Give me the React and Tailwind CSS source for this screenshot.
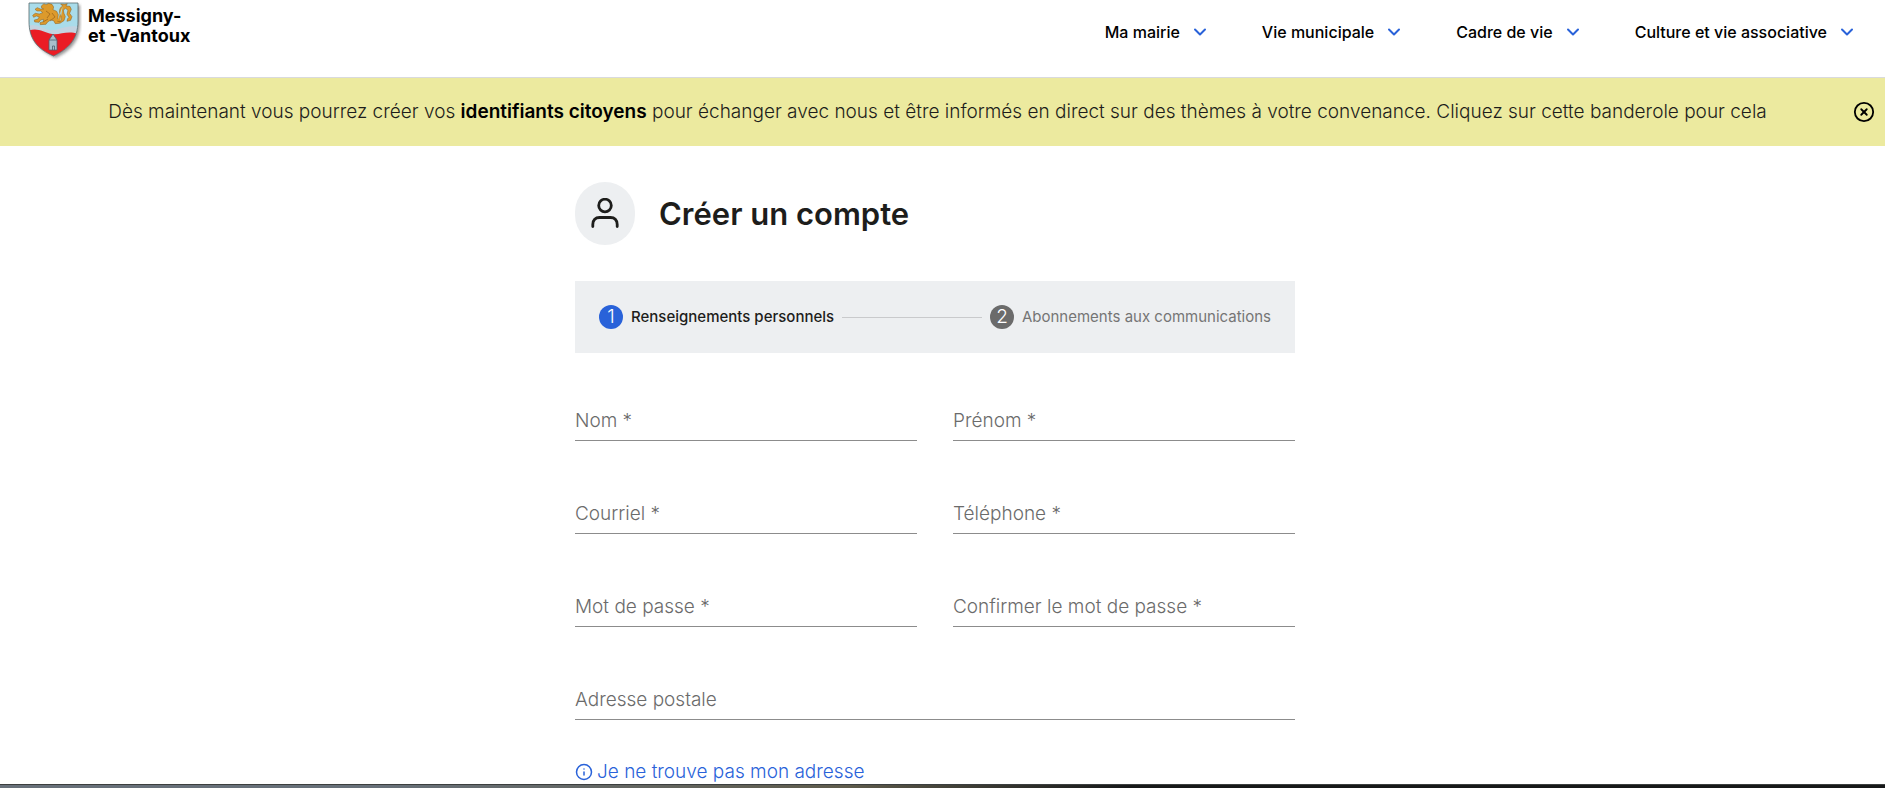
import { ChevronDown, CircleX, Info } from "lucide-react";

const menu = ["Ma mairie", "Vie municipale", "Cadre de vie", "Culture et vie associative"];

const fields = [
  { id: "nom", label: "Nom *", type: "text" },
  { id: "prenom", label: "Prénom *", type: "text" },
  { id: "courriel", label: "Courriel *", type: "email" },
  { id: "telephone", label: "Téléphone *", type: "tel" },
  { id: "motdepasse", label: "Mot de passe *", type: "password" },
  { id: "confirmation", label: "Confirmer le mot de passe *", type: "password" },
  { id: "adresse", label: "Adresse postale", type: "text", wide: true },
];

function Crest() {
  return (
    <svg viewBox="0 0 54 60" className="w-[54px] h-[60px]" aria-hidden="true">
      <defs>
        <clipPath id="shield">
          <path d="M1 1H50V19C50 38 40 47 25.500 54C10 47 1 38 1 19Z" />
        </clipPath>
        <filter id="shade" x="-10%" y="-10%" width="130%" height="130%">
          <feDropShadow dx="2" dy="2" stdDeviation="1.500" floodColor="#555" floodOpacity="0.600" />
        </filter>
      </defs>
      <g filter="url(#shade)">
        <path d="M1 1H50V19C50 38 40 47 25.500 54C10 47 1 38 1 19Z" fill="#a9dcea" />
      </g>
      <g clipPath="url(#shield)">
        <path d="M0 24C8 21 13 26 21 28C30 30 36 22 51 25V33C38 29 33 34 24 32C15 30 10 25 0 30Z" fill="#c3d3e0" />
        <path d="M0 29C9 25 15 30 24 32C33 33 39 28 51 32V56H0Z" fill="#ea1c24" />
      </g>
      <g transform="translate(-2 -2) scale(0.333)" fill="#dc9a2c" stroke="#8a5c1c" strokeWidth="1.500" strokeLinejoin="round">
        <path d="M46 18L54 11L60 14L68 10L78 13L83 21L81 29L92 34L97 44L95 57L104 64L101 70L88 71L83 62L74 60L65 66L60 73L43 74L42 68L52 65L53 58L44 60L39 67L26 66L25 60L35 58L40 51L31 48L23 52L20 46L28 40L40 42L50 38L44 33L33 33L27 28L34 23L43 27L53 27L47 24Z" />
        <path
          d="M94 64C110 68 108 54 103 44C98 34 101 23 110 18M110 18L104 12L116 13L124 11L120 18L132 19L136 28L131 40L138 50L134 61L123 64L125 56L129 52L123 43L126 31L119 25L112 30L114 40L118 50L114 62L102 70"
        />
      </g>
      <path d="M18 9L22 12L19 16M24 11L27 15L22 19M15 20L20 17" fill="none" stroke="#98621c" strokeWidth="0.700" />
      <path d="M21 38L25 32L29 38V48H21Z" fill="#a9bfcb" stroke="#4b616e" strokeWidth="0.800" />
      <path d="M21 38H29M24.500 48V44H26.500V48" fill="none" stroke="#4b616e" strokeWidth="0.800" />
      <path d="M1 1H50V19C50 38 40 47 25.500 54C10 47 1 38 1 19Z" fill="none" stroke="#5a6c70" strokeWidth="0.800" />
    </svg>
  );
}

function Header() {
  return (
    <header className="flex items-start justify-between h-[78px] pl-7 pr-7 border-b border-[#d9dadd]">
      <a href="#accueil" className="flex items-start gap-1.5 pt-0.5 text-black">
        <Crest />
        <span className="pt-1 text-[18px] leading-5 font-bold">
          Messigny-
          <br />
          et -Vantoux
        </span>
      </a>
      <nav className="flex items-center gap-[52px] h-16">
        {menu.map((item) => (
          <button key={item} type="button" className="flex items-center gap-2.5 text-[16px] font-medium text-black">
            {item}
            <ChevronDown className="w-5 h-5 text-[#2962d9]" strokeWidth={2.4} />
          </button>
        ))}
      </nav>
    </header>
  );
}

function Banner() {
  return (
    <div className="flex items-center h-[68px] pl-[86px] pr-2.5 bg-[#ecea9f]">
      <a href="#inscription" className="flex-1 text-center text-[19px] leading-7 font-light text-[#1d1d1b]">
        Dès maintenant vous pourrez créer vos <strong className="font-semibold text-black">identifiants citoyens</strong> pour
        échanger avec nous et être informés en direct sur des thèmes à votre convenance. Cliquez sur cette banderole pour cela
      </a>
      <button type="button" aria-label="Fermer" className="ml-16 text-black">
        <CircleX className="w-[22px] h-[22px]" />
      </button>
    </div>
  );
}

function Step({ number, label, active }) {
  return (
    <li className="flex items-center gap-2 shrink-0">
      <span
        className={`flex items-center justify-center w-6 h-6 rounded-full text-[19px] font-light text-white ${
          active ? "bg-[#2962d9]" : "bg-[#6b6b6b]"
        }`}
      >
        {number}
      </span>
      <span className={`text-[15px] leading-6 ${active ? "font-medium text-[#1d1d1b]" : "text-[#757575]"}`}>{label}</span>
    </li>
  );
}

function Field({ id, label, type, wide }) {
  return (
    <div className={`relative ${wide ? "col-span-2" : ""}`}>
      <input
        id={id}
        type={type}
        placeholder=" "
        className="peer block w-full h-10 border-b border-[#8c8c8c] bg-transparent text-[19px] outline-none focus:border-[#2962d9]"
      />
      <label
        htmlFor={id}
        className="absolute left-0 -top-4 text-xs font-light text-[#6b6b6b] peer-placeholder-shown:top-2 peer-placeholder-shown:text-[19px] peer-placeholder-shown:leading-6"
      >
        {label}
      </label>
    </div>
  );
}

export default function App() {
  return (
    <div className="bg-white font-['Inter',sans-serif] text-[#1d1d1b]">
      <Header />
      <Banner />
      <main className="pt-9 pr-[15px]">
        <div className="max-w-[720px] mx-auto">
          <div className="flex items-center gap-6">
            <span className="flex items-center justify-center w-[60px] h-[63px] rounded-full bg-[#edeff1]">
              <svg viewBox="0 0 28 32" className="w-7 h-8" fill="none" stroke="currentColor" strokeWidth="2.800" strokeLinecap="round" aria-hidden="true">
                <circle cx="14" cy="7.500" r="6.300" />
                <path d="M1.800 28.500V26.500C1.800 22 4.500 19.500 8.500 19.500H19.500C23.500 19.500 26.200 22 26.200 26.500V28.500" />
              </svg>
            </span>
            <h1 className="text-[31px] leading-10 font-semibold">Créer un compte</h1>
          </div>
          <ol className="flex items-center gap-2 h-[72px] mt-9 px-6 bg-[#edeff1]">
            <Step number={1} label="Renseignements personnels" active />
            <li aria-hidden="true" className="flex-1 border-t border-[#c9cacc]" />
            <Step number={2} label="Abonnements aux communications" />
          </ol>
          <form className="grid grid-cols-2 gap-x-9 gap-y-[53px] mt-12">
            {fields.map((field) => (
              <Field key={field.id} {...field} />
            ))}
          </form>
          <a href="#adresse" className="flex items-center w-fit gap-1 mt-10 text-[19px] leading-6 font-light text-[#2962d9]">
            <Info className="w-[18px] h-[18px]" />
            Je ne trouve pas mon adresse
          </a>
        </div>
      </main>
      <footer className="h-1 border-t border-[#3c3f3f] bg-linear-to-r from-[#68717a] from-20% via-[#5f5c4c] via-45% to-[#161819] to-60%" />
    </div>
  );
}
